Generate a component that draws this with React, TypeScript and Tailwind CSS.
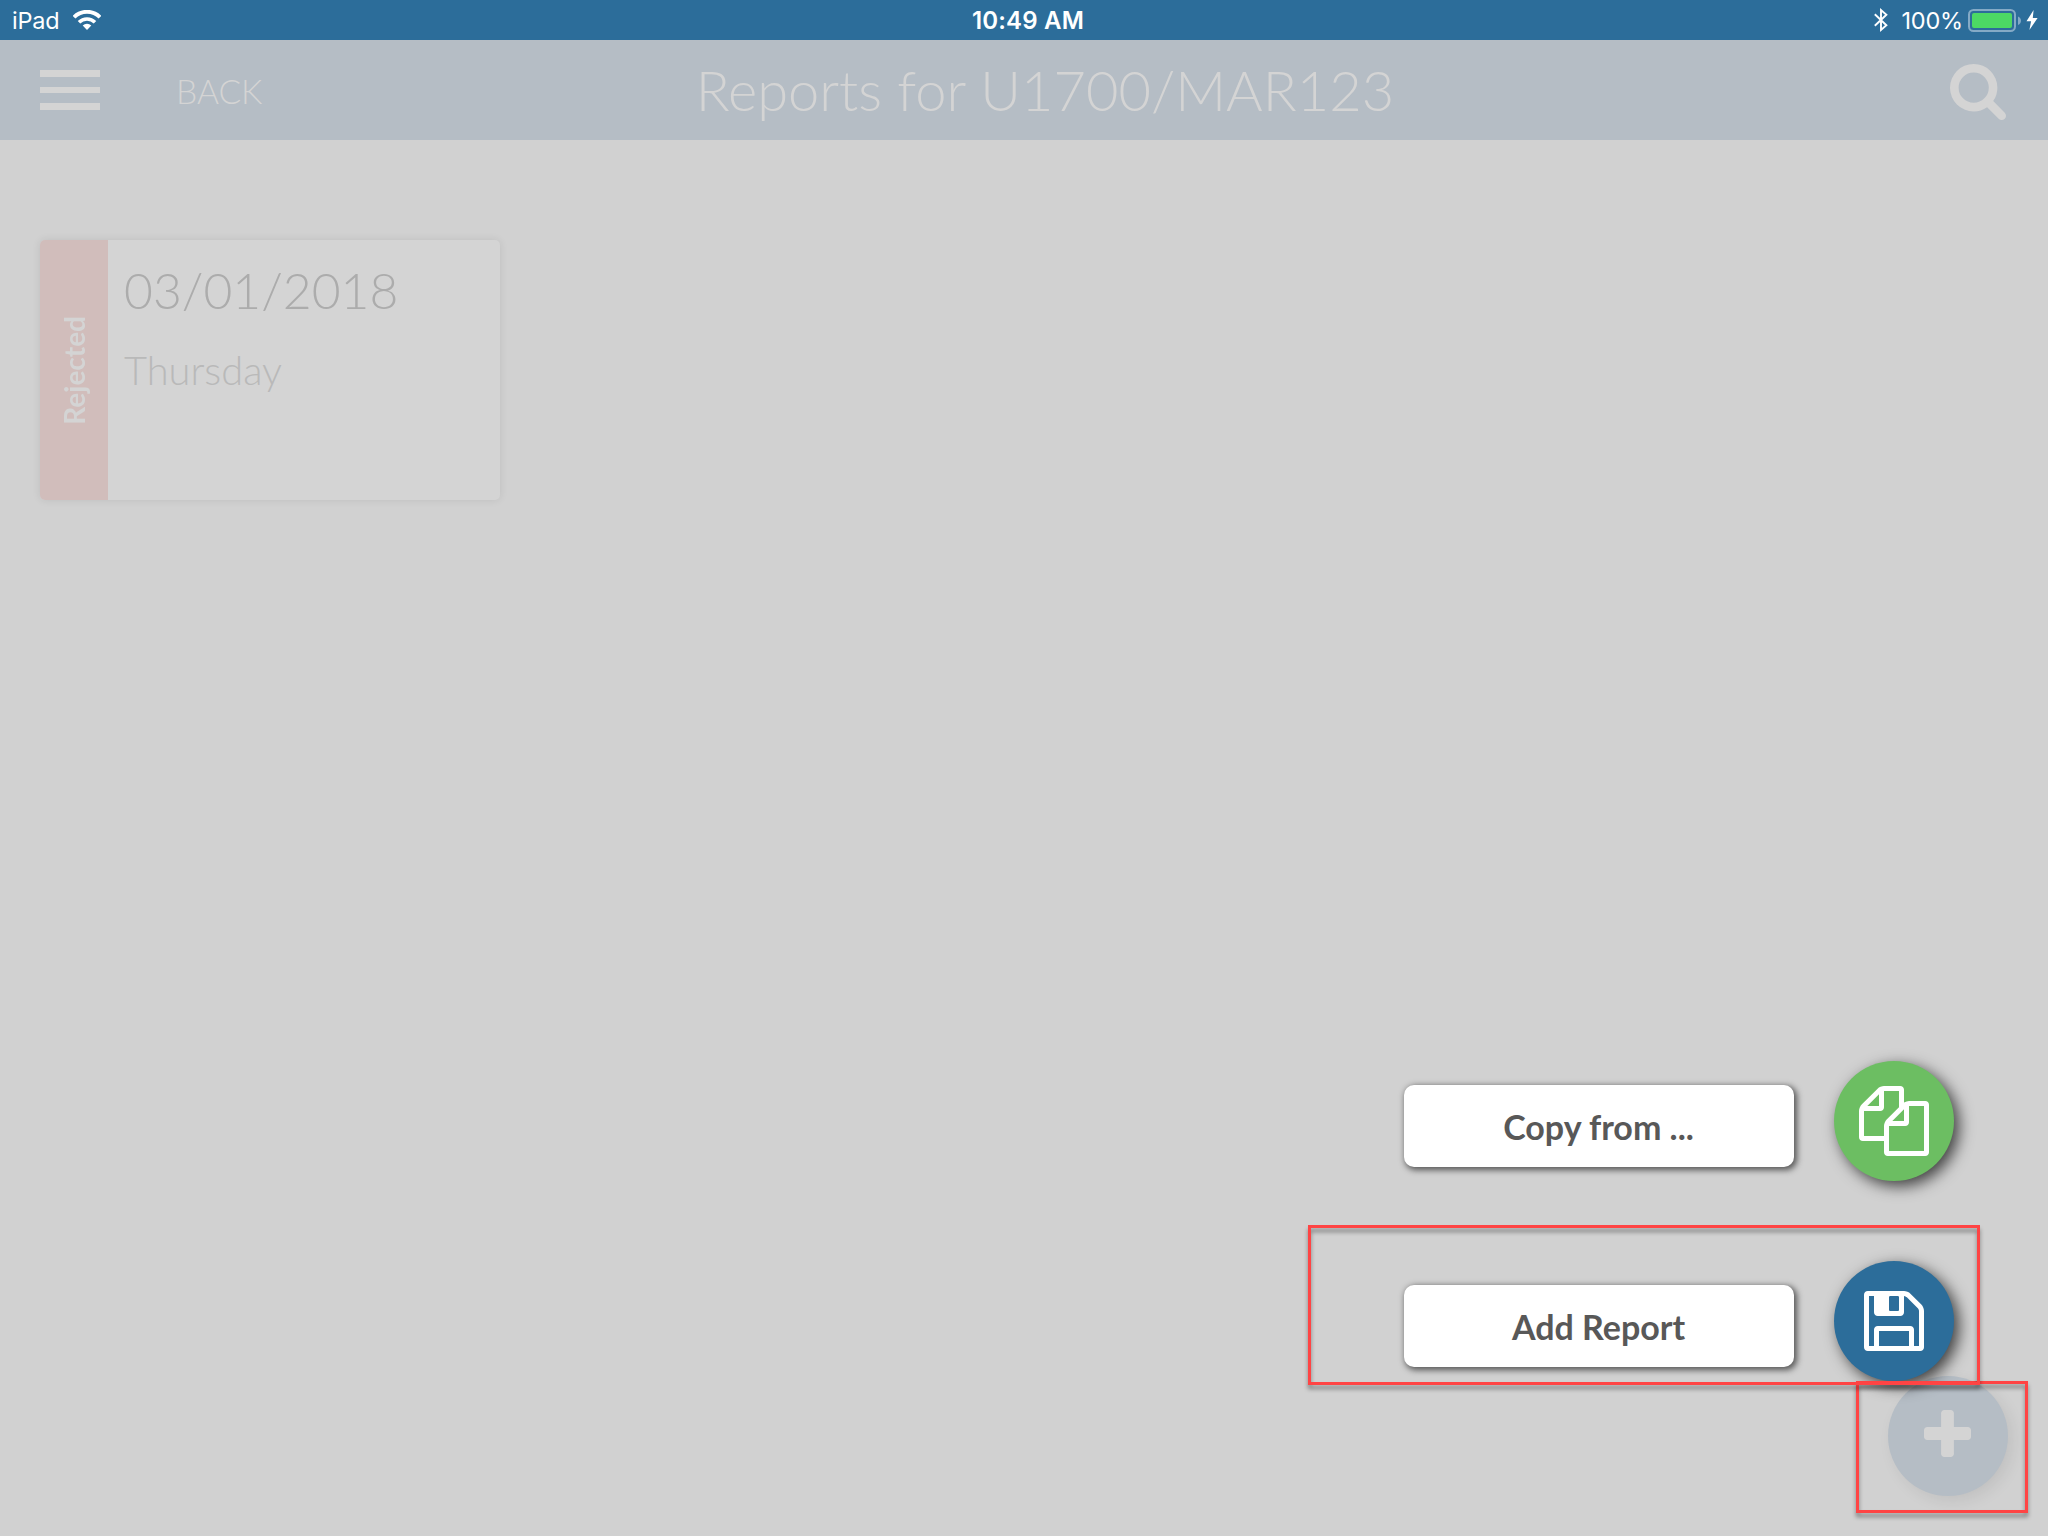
import React from "react";

const FILES_O =
  "M1696 384q40 0 68 28t28 68v1216q0 40-28 68t-68 28h-960q-40 0-68-28t-28-68v-288h-544q-40 0-68-28t-28-68v-672q0-40 20-88t48-76l408-408q28-28 76-48t88-20h416q40 0 68 28t28 68v328q68-40 128-40h416zM1152 597l-299 299h299v-299zM512 213l-299 299h299v-299zM708 860l316-316v-416h-384v416q0 40-28 68t-68 28h-416v640h512v-256q0-40 20-88t48-76zM1664 1664v-1152h-384v416q0 40-28 68t-68 28h-416v640h896z";
const FLOPPY_O =
  "M384 1536h768v-384h-768v384zM1280 1536h128v-896q0-14-10-38.5t-20-34.5l-281-281q-10-10-34-20t-39-10v416q0 40-28 68t-68 28h-576q-40 0-68-28t-28-68v-416h-128v1280h128v-416q0-40 28-68t68-28h832q40 0 68 28t28 68v416zM896 608v-320q0-13-9.5-22.5t-22.5-9.5h-192q-13 0-22.5 9.5t-9.5 22.5v320q0 13 9.5 22.5t22.5 9.5h192q13 0 22.5-9.5t9.5-22.5zM1536 640v928q0 40-28 68t-68 28h-1344q-40 0-68-28t-28-68v-1344q0-40 28-68t68-28h928q40 0 88 20t76 48l280 280q28 28 48 76t20 88z";
const SEARCH =
  "M1152 832q0-185-131.5-316.5t-316.5-131.5-316.5 131.5-131.5 316.5 131.5 316.5 316.5 131.5 316.5-131.5 131.5-316.5zM1664 1664q0 52-38 90t-90 38q-54 0-90-38l-343-342q-179 124-399 124-143 0-273.5-55.5t-225-150-150-225-55.5-273.5 55.5-273.5 150-225 225-150 273.5-55.5 273.5 55.5 225 150 150 225 55.5 273.5q0 220-124 399l343 343q37 37 37 90z";
const PLUS =
  "M1408 736v192q0 40-28 68t-68 28h-416v416q0 40-28 68t-68 28h-192q-40 0-68-28t-28-68v-416h-416q-40 0-68-28t-28-68v-192q0-40 28-68t68-28h416v-416q0-40 28-68t68-28h192q40 0 68 28t28 68v416h416q40 0 68 28t28 68z";

function Glyph({ d, viewBox, className }: { d: string; viewBox: string; className: string }) {
  return (
    <svg viewBox={viewBox} className={className} fill="currentColor" aria-hidden="true">
      <path d={d} />
    </svg>
  );
}

function StatusBar() {
  return (
    <div className="grid h-10 shrink-0 grid-cols-3 items-center bg-[#2c6d9a] pl-3 pr-[10px] font-['Inter',sans-serif] text-[24px] leading-[39px] text-white">
      <div className="flex items-center">
        <span className="pt-px text-[23.5px] tracking-[-0.2px]">iPad</span>
        <svg viewBox="0 0 28 20" className="ml-[13px] h-5 w-7" fill="none" stroke="#fff" aria-hidden="true">
          <path d="M1 7.2a18.4 18.4 0 0 1 26 0" strokeWidth="4" />
          <path d="M6 12.3a11.4 11.4 0 0 1 16 0" strokeWidth="3.6" />
          <path d="M14 20l-4.3-4.4a6 6 0 0 1 8.6 0z" fill="#fff" stroke="none" />
        </svg>
      </div>
      <div className="pt-px text-center font-semibold tracking-[0.2px]">
        <span className="pl-1.5">10:49 AM</span>
      </div>
      <div className="flex items-center justify-end">
        <svg viewBox="0 0 14 24" className="mr-[14px] h-6 w-[14px]" fill="none" stroke="#fff" strokeWidth="1.9" aria-hidden="true">
          <path d="M0.8 6.2L12.4 17.2L7 21.9V2.1l5.4 4.7L0.8 17.8" />
        </svg>
        <span className="pt-px text-[23.5px] tracking-[-0.2px]">100%</span>
        <svg viewBox="0 0 54 24" className="ml-[5px] h-6 w-[54px]" aria-hidden="true">
          <rect x="1" y="2" width="46" height="21" rx="4.5" fill="none" stroke="#84aac6" strokeWidth="2" />
          <rect x="4" y="5" width="40" height="15" rx="2" fill="#4cd964" />
          <path d="M50 8.5c4 1.5 4 7 0 8.500z" fill="#84aac6" />
        </svg>
        <svg viewBox="0 0 12 20" className="ml-1 h-5 w-3" fill="#fff" aria-hidden="true">
          <path d="M7.6 0L0.5 11.2h4.6L3.4 20L11.6 8h-4.8z" />
        </svg>
      </div>
    </div>
  );
}

function Header() {
  return (
    <header className="flex h-[100px] shrink-0 items-center bg-[#b5bdc5] pl-10 pr-[42px] text-[#d4d4d4]">
      <button className="flex h-10 w-[60px] flex-col justify-between" aria-label="Menu">
        <span className="h-[7px] w-full bg-current" />
        <span className="h-[6px] w-full bg-current" />
        <span className="h-[7px] w-full bg-current" />
      </button>
      <button className="ml-[76px] w-[100px] pt-0.5 text-left text-[33.6px] font-light leading-10">BACK</button>
      <h1 className="flex-1 pr-1 text-center text-[56px] font-light leading-[68px]">
        Reports for U1700/MAR123
      </h1>
      <div className="w-[188px] pt-1 text-right">
        <Glyph d={SEARCH} viewBox="0 128 1664 1664" className="ml-auto size-14" />
      </div>
    </header>
  );
}

function ReportCard() {
  return (
    <article className="flex h-[260px] w-[460px] overflow-hidden rounded-[5px] bg-[#d4d4d4] shadow-[0_0_8px_rgba(0,0,0,0.09)]">
      <div className="flex w-[68px] items-center justify-center bg-[#d1bdbb]">
        <span className="rotate-180 text-[28px] font-bold leading-[34px] text-[#d4d4d4] [writing-mode:vertical-rl]">
          Rejected
        </span>
      </div>
      <div className="pl-4 pt-5">
        <div className="text-[49.8px] font-light leading-[60px] text-[#acacac]">03/01/2018</div>
        <div className="mt-[26px] text-[39.8px] font-light leading-[48px] text-[#b9b9b9]">Thursday</div>
      </div>
    </article>
  );
}

function Action({ label, tone, children }: { label: string; tone: string; children: React.ReactNode }) {
  return (
    <div className="flex items-center gap-10">
      <button className="mt-[10px] h-[82px] w-[390px] rounded-[10px] bg-white pr-px pt-px text-[34px] font-bold leading-10 text-[#585858] shadow-[2px_2px_6px_1px_rgba(0,0,0,0.6)]">
        {label}
      </button>
      <div className={`flex size-[120px] items-center justify-center rounded-full text-white shadow-[5px_5px_15px_rgba(0,0,0,0.7)] ${tone}`}>
        {children}
      </div>
    </div>
  );
}

export default function App() {
  return (
    <div className="relative flex h-[1536px] w-[2048px] flex-col overflow-hidden bg-[#d1d1d1] font-['Lato',sans-serif]">
      <StatusBar />
      <Header />
      <main className="flex-1 px-10 pt-[100px]">
        <ReportCard />
      </main>

      <button
        aria-label="Close menu"
        className="absolute bottom-10 right-10 flex size-[120px] items-center justify-center rounded-full bg-[#b5bdc5] pb-[5px] pr-px text-[#d4d4d4] shadow-[5px_5px_15px_rgba(0,0,0,0.08)]"
      >
        <Glyph d={PLUS} viewBox="0 128 1408 1408" className="size-[47px]" />
      </button>
      <div className="absolute bottom-[155px] right-[94px] flex flex-col gap-20">
        <Action label="Copy from ..." tone="bg-[#6cbe62]">
          <Glyph d={FILES_O} viewBox="0 0 1792 1792" className="size-[70px]" />
        </Action>
        <Action label="Add Report" tone="bg-[#2c6d9a]">
          <Glyph d={FLOPPY_O} viewBox="0 128 1536 1536" className="size-[60px]" />
        </Action>
      </div>

      <div className="absolute bottom-[23px] right-5 h-[132px] w-[172px] border-[3px] border-[#ff4444] drop-shadow-[0_4px_2px_rgba(0,0,0,0.4)]" />
      <div className="absolute bottom-[151px] right-[68px] h-[160px] w-[672px] border-[3px] border-[#ff4444] drop-shadow-[0_4px_2px_rgba(0,0,0,0.4)]" />
    </div>
  );
}
